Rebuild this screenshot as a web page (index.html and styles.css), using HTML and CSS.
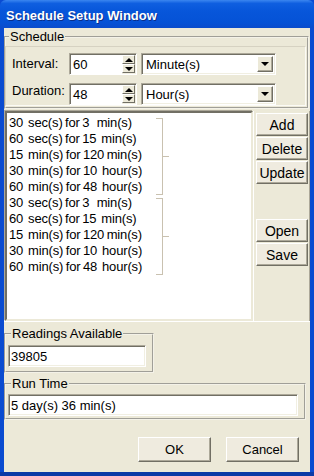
FILE: index.html
```html
<!DOCTYPE html>
<html lang="en">
<head>
    <meta charset="UTF-8">
    <title>Schedule Setup Window</title>
    <link rel="stylesheet" href="styles.css">
</head>
<body>
    <div class="window">
        <div class="titlebar">Schedule Setup Window</div>
        <div class="frame">
            <div class="client">

                <fieldset class="group schedule">
                    <legend>Schedule</legend>
                    <div class="panel">
                        <div class="row">
                            <span class="label">Interval:</span>
                            <div class="field spin-text">60</div>
                            <div class="spin">
                                <div class="spin-btn"><span class="arrow-up"></span></div>
                                <div class="spin-btn"><span class="arrow-down"></span></div>
                            </div>
                            <div class="field combo">
                                <span class="combo-text">Minute(s)</span>
                                <div class="combo-btn"><span class="arrow-down"></span></div>
                            </div>
                        </div>
                        <div class="row">
                            <span class="label">Duration:</span>
                            <div class="field spin-text">48</div>
                            <div class="spin">
                                <div class="spin-btn"><span class="arrow-up"></span></div>
                                <div class="spin-btn"><span class="arrow-down"></span></div>
                            </div>
                            <div class="field combo">
                                <span class="combo-text">Hour(s)</span>
                                <div class="combo-btn"><span class="arrow-down"></span></div>
                            </div>
                        </div>
                    </div>
                </fieldset>

                <div class="list-area">
                    <div class="listbox">
                        <div class="item-group">
                            <div class="items">
                                <div class="item">30  sec(s) for 3   min(s)</div>
                                <div class="item">60  sec(s) for 15  min(s)</div>
                                <div class="item">15  min(s) for 120 min(s)</div>
                                <div class="item">30  min(s) for 10  hour(s)</div>
                                <div class="item">60  min(s) for 48  hour(s)</div>
                            </div>
                            <div class="bracket"></div>
                        </div>
                        <div class="item-group">
                            <div class="items">
                                <div class="item">30  sec(s) for 3   min(s)</div>
                                <div class="item">60  sec(s) for 15  min(s)</div>
                                <div class="item">15  min(s) for 120 min(s)</div>
                                <div class="item">30  min(s) for 10  hour(s)</div>
                                <div class="item">60  min(s) for 48  hour(s)</div>
                            </div>
                            <div class="bracket"></div>
                        </div>
                    </div>
                    <div class="side-panel">
                        <button class="btn side-btn">Add</button>
                        <button class="btn side-btn">Delete</button>
                        <button class="btn side-btn">Update</button>
                        <button class="btn side-btn open">Open</button>
                        <button class="btn side-btn">Save</button>
                    </div>
                </div>

                <fieldset class="group readings">
                    <legend>Readings Available</legend>
                    <div class="field text-field">39805</div>
                </fieldset>

                <fieldset class="group runtime">
                    <legend>Run Time</legend>
                    <div class="field text-field">5 day(s) 36 min(s)</div>
                </fieldset>

                <div class="dialog-buttons">
                    <button class="btn dlg-btn">OK</button>
                    <button class="btn dlg-btn">Cancel</button>
                </div>

            </div>
        </div>
    </div>
</body>
</html>
```

FILE: styles.css
```css
* {
    margin: 0;
    padding: 0;
    box-sizing: border-box;
}

body {
    width: 314px;
    height: 476px;
    overflow: hidden;
    font-family: 'Liberation Sans', Arial, sans-serif;
    font-size: 13px;
    color: #000;
    background: #0a4bd2;
}

.window {
    width: 314px;
    height: 476px;
    display: flex;
    flex-direction: column;
}

.titlebar {
    height: 28px;
    flex: none;
    padding: 8px 0 0 6px;
    color: #fff;
    font-weight: bold;
    font-size: 13px;
    line-height: 15px;
    background: linear-gradient(180deg, #3b86f0 0%, #0f5fe0 12%, #0756da 40%, #0552d6 80%, #0a4ccc 100%);
    border-radius: 6px 6px 0 0;
    text-shadow: 1px 1px 0 #0a2f8a;
}

.frame {
    flex: 1;
    padding: 0 4px 4px 4px;
    background: linear-gradient(90deg, #0a4bd0, #1a5ee0 50%, #0a4bd0);
    box-shadow: inset 0 -4px 0 #0c3aa6;
    display: flex;
}

.client {
    flex: 1;
    background: #ece9d8;
    padding-top: 1px;
    display: flex;
    flex-direction: column;
}

/* group boxes */
.group {
    border: 2px groove #f4f2e8;
    padding: 0;
}

.group legend {
    margin-left: 3px;
    padding: 0 1px;
    line-height: 15px;
}

.schedule {
    width: 305px;
    padding: 0 1px 0 0;
}

.panel {
    margin: 2px 0 1px -1px;
    height: 60px;
    border: 1px solid #fbfaf5;
    border-left-color: #d6d2c2;
    border-top-color: #d6d2c2;
    padding: 6px 0 0 6px;
    display: flex;
    flex-direction: column;
    gap: 8px;
}

.row {
    display: flex;
    height: 22px;
}

.row .label {
    width: 57px;
    padding-top: 3px;
}

.row:nth-child(2) .label {
    padding-top: 0;
}

/* sunken fields */
.field {
    background: #fff;
    border: 1px solid;
    border-color: #aca899 #fff #fff #aca899;
    box-shadow: inset 1px 1px 0 #716f64, inset -1px -1px 0 #f1efe2;
}

.spin-text {
    width: 53px;
    height: 22px;
    padding: 3px 0 0 3px;
    border-right: none;
    box-shadow: inset 1px 1px 0 #716f64;
}

.spin {
    width: 15px;
    height: 22px;
    display: flex;
    flex-direction: column;
    border-top: 1px solid #aca899;
    border-bottom: 1px solid #fff;
    background: #fff;
    padding: 1px 1px 1px 0;
    border-right: 1px solid #fff;
    box-shadow: inset 0 1px 0 #716f64, inset -1px -1px 0 #f1efe2;
}

.spin-btn {
    flex: 1;
    display: flex;
    align-items: center;
    justify-content: center;
    background: #ece9d8;
    border: 1px solid;
    border-color: #fff #716f64 #716f64 #fff;
}

.arrow-up {
    width: 0;
    height: 0;
    border-left: 4px solid transparent;
    border-right: 4px solid transparent;
    border-bottom: 4px solid #000;
}

.arrow-down {
    width: 0;
    height: 0;
    border-left: 4px solid transparent;
    border-right: 4px solid transparent;
    border-top: 4px solid #000;
}

.combo {
    margin-left: 4px;
    width: 135px;
    height: 22px;
    display: flex;
    align-items: stretch;
    padding: 2px;
}

.combo-text {
    flex: 1;
    padding: 1px 0 0 2px;
}

.combo-btn {
    width: 16px;
    display: flex;
    align-items: center;
    justify-content: center;
    background: #ece9d8;
    border: 1px solid;
    border-color: #fff #716f64 #716f64 #fff;
    box-shadow: inset -1px -1px 0 #aca899;
}

/* list and side buttons */
.list-area {
    margin-top: 2px;
    height: 211px;
    display: flex;
    border-bottom: 1px solid #fff;
}

.listbox {
    width: 248px;
    background: #fff;
    border: 2px solid;
    border-color: #716f64 #ece9d8 #ece9d8 #716f64;
    box-shadow: -1px -1px 0 #aca899;
    padding: 2px 0 0 2px;
    margin-left: 1px;
}

.item-group {
    display: flex;
    align-items: flex-start;
}

.items {
    width: 147px;
}

.item {
    height: 16px;
    line-height: 16px;
    white-space: pre;
    word-spacing: -1px;
    letter-spacing: -0.15px;
}

.bracket {
    position: relative;
    width: 7px;
    height: 77px;
    margin-top: 3px;
    border: 1px solid #c9c1b0;
    border-left: none;
}

.bracket::after {
    content: "";
    position: absolute;
    left: 6px;
    top: 37px;
    width: 7px;
    height: 1px;
    background: #c9c1b0;
}

.side-panel {
    width: 57px;
    display: flex;
    flex-direction: column;
    gap: 1px;
    padding: 2px 2px 0 2px;
    border-left: 1px solid #fff;
    border-right: 1px solid #aca899;
}

.btn {
    font-family: 'Liberation Sans', Arial, sans-serif;
    font-size: 14px;
    color: #000;
    background: #efebdf;
    border: 1px solid;
    border-color: #fff #716f64 #716f64 #fff;
    box-shadow: inset -1px -1px 0 #aca899;
}

.side-btn {
    height: 23px;
    width: 52px;
    line-height: 20px;
}

.side-btn.open {
    margin-top: 34px;
}

.readings {
    width: 150px;
    margin-top: 4px;
    padding: 0 2px 4px 2px;
}

.readings .text-field {
    margin-top: 4px;
    width: 138px;
}

.runtime {
    width: 302px;
    margin-top: 3px;
    padding: 0 2px 2px 2px;
}

.runtime .text-field {
    margin-top: 3px;
    width: 290px;
}

.text-field {
    height: 22px;
    padding: 3px 0 0 2px;
}

.dialog-buttons {
    margin-top: 17px;
    display: flex;
    justify-content: flex-end;
    gap: 15px;
    padding-right: 11px;
}

.dlg-btn {
    width: 73px;
    height: 25px;
    font-size: 13px;
}
```
